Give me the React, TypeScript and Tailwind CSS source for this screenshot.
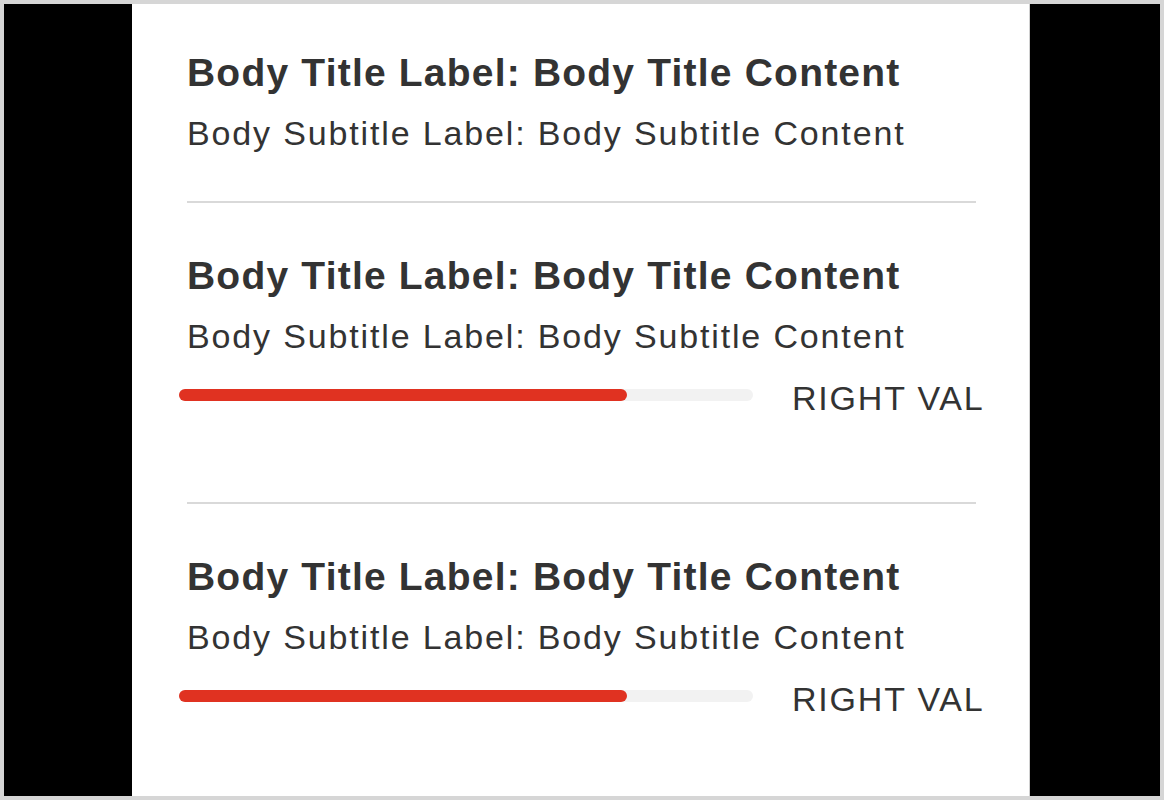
const items = [
  { progress: null },
  { progress: 78 },
  { progress: 78 },
];

function ProgressRow({ value }: { value: number }) {
  return (
    <div className="mt-[22px] flex items-center">
      <div className="mb-[7px] ml-[-8px] h-[12px] w-[574px] shrink-0 rounded-full bg-[#f2f2f2]">
        <div className="h-full rounded-full bg-[#e03221]" style={{ width: `${value}%` }} />
      </div>
      <span className="ml-[39px] shrink-0 whitespace-nowrap text-[34px] leading-[40px] tracking-[1.8px] text-[#333]">
        RIGHT VAL
      </span>
    </div>
  );
}

export default function App() {
  return (
    <div
      className="flex h-[800px] w-[1164px] border-4 border-[#d6d6d6] bg-black"
      style={{ fontFamily: '"Liberation Sans", Arial, sans-serif' }}
    >
      <div className="w-[128px] bg-black" />
      <div className="w-[898px] border-r border-[#d0d0d0] bg-white pl-[55px] pr-[53px]">
        {items.map((item, i) => (
          <div key={i} className={i === 0 ? 'pt-[49px]' : 'border-t-2 border-[#d9d9d9] pt-[53px]'}>
            <p className="whitespace-nowrap text-[39px] font-bold leading-[40px] tracking-[1.2px] text-[#333]">
              Body Title Label: Body Title Content
            </p>
            <p className="mt-[20px] whitespace-nowrap text-[34px] leading-[40px] tracking-[1.85px] text-[#333]">
              Body Subtitle Label: Body Subtitle Content
            </p>
            {item.progress !== null ? (
              <div className="pb-[84px]">
                <ProgressRow value={item.progress} />
              </div>
            ) : (
              <div className="pb-[48px]" />
            )}
          </div>
        ))}
      </div>
      <div className="flex-1 bg-black" />
    </div>
  );
}
